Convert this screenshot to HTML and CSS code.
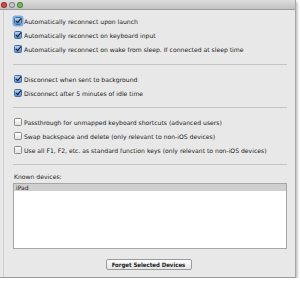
FILE: index.html
```html
<!DOCTYPE html>
<html lang="en">
<head>
  <meta charset="UTF-8" />
  <title>Preferences</title>
  <link rel="stylesheet" href="styles.css">
</head>
<body>
  <div class="window">
    <div class="titlebar">
      <span class="light red"></span>
      <span class="light yellow"></span>
      <span class="light green"></span>
    </div>

    <div class="content">
      <div class="group first">
        <label class="row"><span class="box checked focus"></span>Automatically reconnect upon launch</label>
        <label class="row"><span class="box checked"></span>Automatically reconnect on keyboard input</label>
        <label class="row"><span class="box checked"></span>Automatically reconnect on wake from sleep. If connected at sleep time</label>
      </div>

      <div class="group">
        <label class="row"><span class="box checked"></span>Disconnect when sent to background</label>
        <label class="row"><span class="box checked"></span>Disconnect after 5 minutes of idle time</label>
      </div>

      <div class="group">
        <label class="row"><span class="box"></span>Passthrough for unmapped keyboard shortcuts (advanced users)</label>
        <label class="row"><span class="box"></span>Swap backspace and delete (only relevant to non-iOS devices)</label>
        <label class="row"><span class="box"></span>Use all F1, F2, etc. as standard function keys (only relevant to non-iOS devices)</label>
      </div>

      <div class="devices">
        <div class="devices-label">Known devices:</div>
        <div class="device-list">
          <div class="device selected">iPad</div>
        </div>
      </div>

      <div class="actions">
        <button class="btn">Forget Selected Devices</button>
      </div>
    </div>
  </div>
</body>
</html>
```

FILE: styles.css
```css
body {
  margin: 0;
  background: #fff;
  font-family: "DejaVu Sans", "Liberation Sans", sans-serif;
  font-size: 6.1px;
  color: #222;
}

.window {
  width: 295px;
  height: 277px;
  background: #e8e8e8;
  border-right: 1px solid #a8a8a8;
  border-bottom: 1px solid #9a9a9a;
  box-shadow: 1px 2px 3px rgba(0,0,0,0.35);
  display: flex;
  flex-direction: column;
}

.titlebar {
  height: 10px;
  background: linear-gradient(#dedede, #c2c2c2);
  border-bottom: 1px solid #9c9c9c;
  display: flex;
  align-items: center;
  gap: 2px;
  padding-left: 1px;
  box-sizing: border-box;
}
.light {
  width: 4px;
  height: 4px;
  border-radius: 50%;
  border: 0.5px solid rgba(0,0,0,0.35);
}
.red { background: #e0443e; }
.yellow { background: #c8c8c8; }
.green { background: #6fc24f; }

.content {
  flex: 1;
  margin-left: 3px;
  border-left: 1px solid #d0d0d0;
  padding: 0 8px 0 9px;
  display: flex;
  flex-direction: column;
}

.group {
  display: flex;
  flex-direction: column;
  padding: 7px 0 7px;
  border-bottom: 1px solid #c4c4c4;
}
.group.first {
  padding-top: 4px;
  padding-bottom: 8px;
}

.row {
  height: 14px;
  display: flex;
  align-items: center;
  gap: 2px;
  white-space: nowrap;
}

.box {
  width: 6px;
  height: 6px;
  border: 1px solid #8a8a8a;
  border-radius: 1.5px;
  background: linear-gradient(#fefefe, #e0e0e0);
  margin-left: 1px;
  flex: none;
  position: relative;
}
.box.checked {
  border-color: #3f6fa8;
  background: linear-gradient(#b4d2f2, #4f8fd6);
}
.box.checked::after {
  content: "";
  position: absolute;
  left: 1.5px;
  top: -1px;
  width: 2px;
  height: 5px;
  border-right: 1.5px solid #111;
  border-bottom: 1.5px solid #111;
  transform: rotate(40deg);
}
.box.focus {
  box-shadow: 0 0 0 1.5px #7fa9e3;
}

.devices {
  padding-top: 6px;
  display: flex;
  flex-direction: column;
}
.devices-label {
  height: 12px;
  line-height: 12px;
  padding-left: 1px;
}
.device-list {
  height: 64px;
  background: #fff;
  border: 1px solid #a6a6a6;
}
.device {
  height: 7px;
  line-height: 7px;
  padding-left: 2px;
  font-size: 6px;
}
.device.selected {
  background: #cfcfcf;
}

.actions {
  display: flex;
  justify-content: center;
  padding-top: 10px;
  padding-right: 3px;
}
.btn {
  font-family: "DejaVu Sans Condensed", "DejaVu Sans", sans-serif;
  font-size: 6px;
  font-weight: bold;
  color: #222;
  white-space: nowrap;
  width: 86px;
  height: 11px;
  padding: 0;
  border: 1px solid #9a9a9a;
  border-radius: 2px;
  background: linear-gradient(#ffffff, #e4e4e4);
}
```
